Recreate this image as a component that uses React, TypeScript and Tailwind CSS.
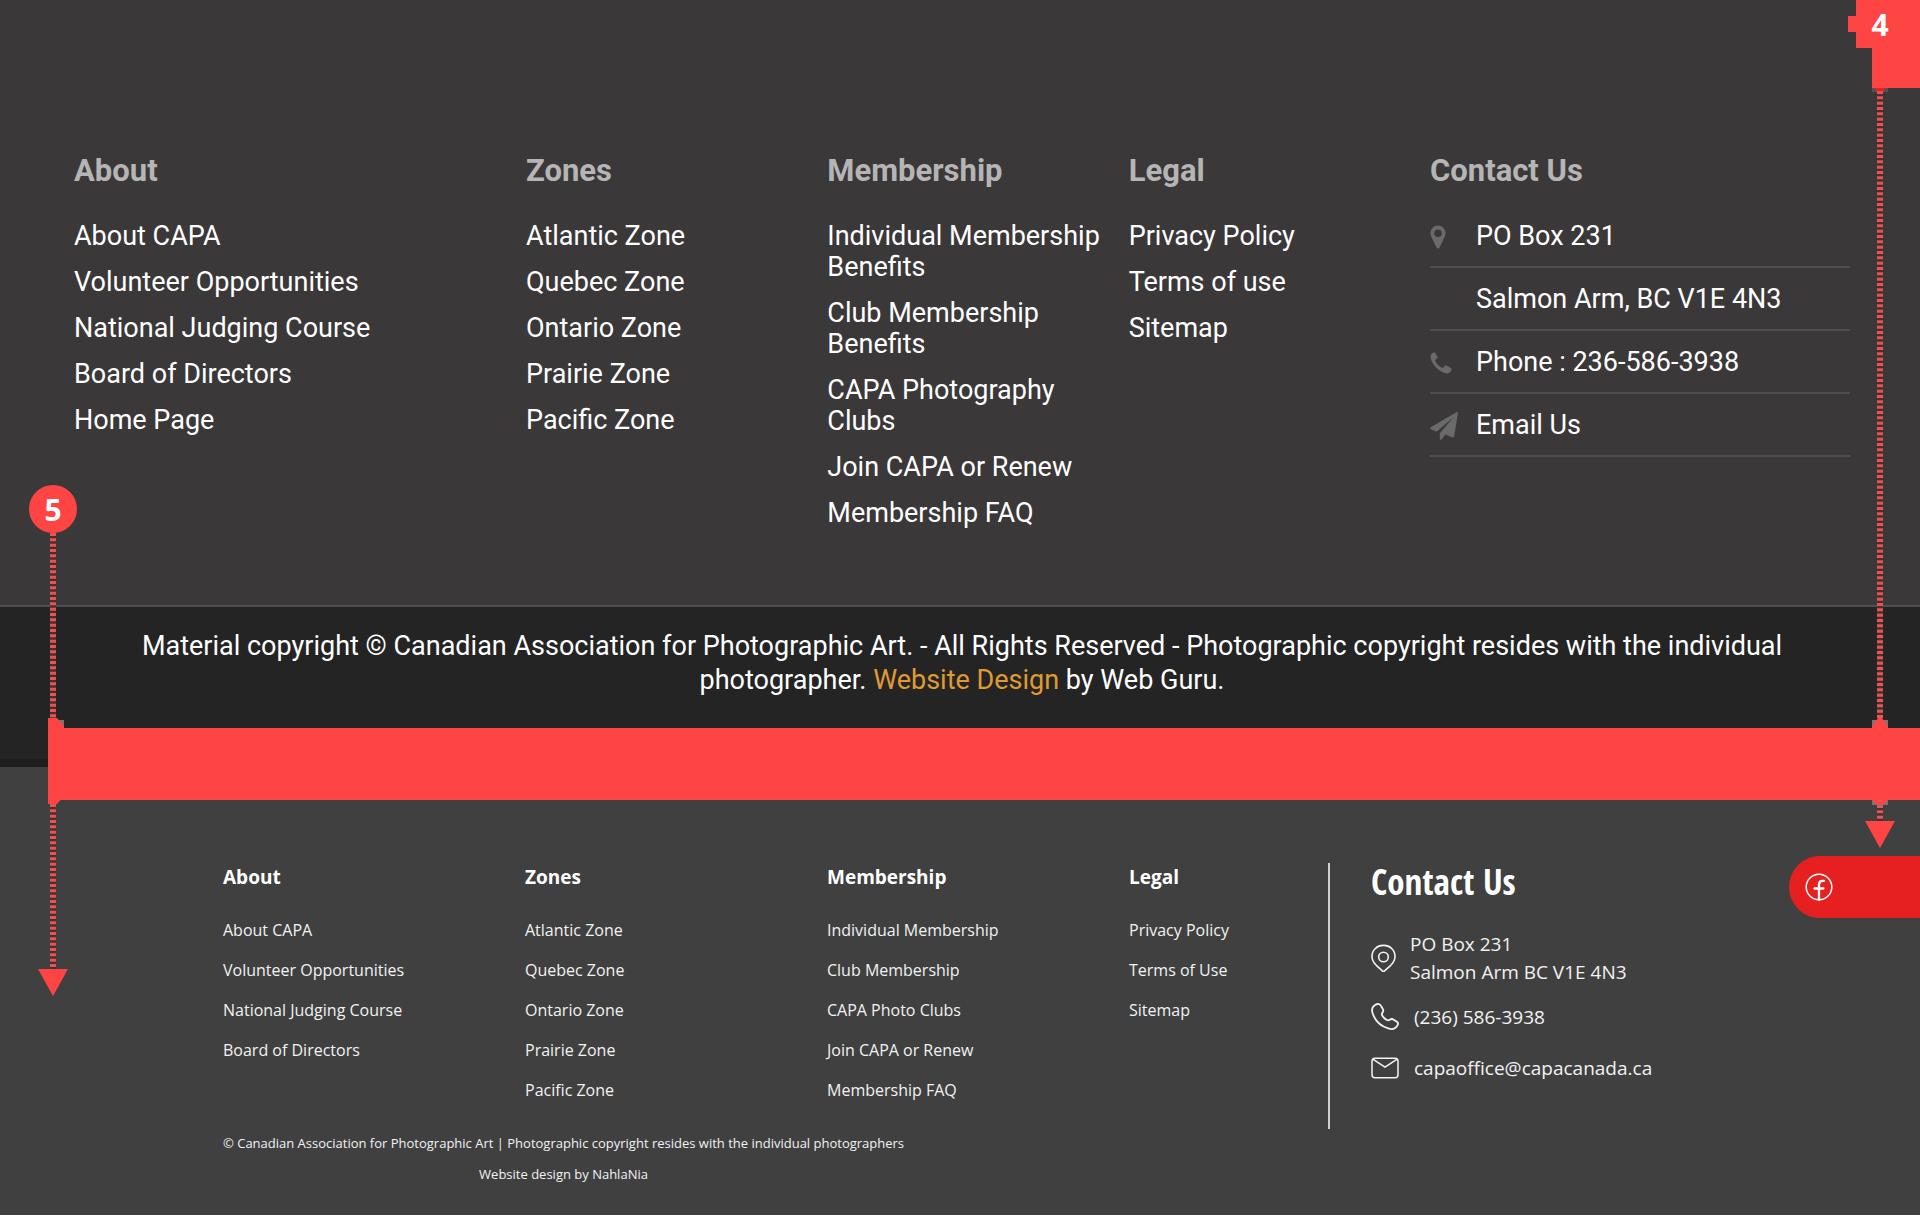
import React from "react";

type LinkGroup = { title: string; links: string[]; span?: string };

const currentGroups: LinkGroup[] = [
  {
    title: "About",
    span: "col-span-3",
    links: ["About CAPA", "Volunteer Opportunities", "National Judging Course", "Board of Directors", "Home Page"],
  },
  {
    title: "Zones",
    span: "col-span-2",
    links: ["Atlantic Zone", "Quebec Zone", "Ontario Zone", "Prairie Zone", "Pacific Zone"],
  },
  {
    title: "Membership",
    span: "col-span-2",
    links: [
      "Individual Membership Benefits",
      "Club Membership Benefits",
      "CAPA Photography Clubs",
      "Join CAPA or Renew",
      "Membership FAQ",
    ],
  },
  { title: "Legal", span: "col-span-2", links: ["Privacy Policy", "Terms of use", "Sitemap"] },
];

const redesignGroups: LinkGroup[] = [
  { title: "About", links: ["About CAPA", "Volunteer Opportunities", "National Judging Course", "Board of Directors"] },
  { title: "Zones", links: ["Atlantic Zone", "Quebec Zone", "Ontario Zone", "Prairie Zone", "Pacific Zone"] },
  {
    title: "Membership",
    links: ["Individual Membership", "Club Membership", "CAPA Photo Clubs", "Join CAPA or Renew", "Membership FAQ"],
  },
  { title: "Legal", links: ["Privacy Policy", "Terms of Use", "Sitemap"] },
];

function SolidPin() {
  return (
    <svg viewBox="0 0 16 24" className="h-6 w-4" fill="currentColor" aria-hidden="true">
      <path
        fillRule="evenodd"
        d="M8 .5a7.600 7.600 0 0 0-7.600 7.600c0 1.300.3 2.500.8 3.500l5.300 11c.6 1.200 2.400 1.200 3 0l5.300-11c.5-1 .8-2.200.8-3.500A7.600 7.600 0 0 0 8 .5Zm0 4a3.800 3.800 0 1 1 0 7.600a3.800 3.800 0 0 1 0-7.600Z"
      />
    </svg>
  );
}

function SolidPhone() {
  return (
    <svg viewBox="0 0 22 22" className="size-[22px]" fill="currentColor" aria-hidden="true">
      <path d="M21.500 17.200c0 .5-.3 1.600-.5 2.100-.5 1.100-2.500 2.100-3.800 2.100-1.600 0-3.100-.6-4.500-1.200C8.100 18.100 3.700 13.700 1.700 9.200 1 7.700.5 6.300.5 4.700.5 3.300 1.500 1.400 2.700.9 3.200.7 4.200.5 4.700.5c.3 0 .4 0 .6.4.7 1.300 1.400 2.600 2.100 3.800.1.200.3.400.3.700 0 1-2.700 2.100-2.700 2.900 0 .4.400.9.600 1.300 1.500 2.600 3.300 4.500 6 5.900.4.200.8.500 1.200.5.900 0 1.900-2.700 2.900-2.700.3 0 .5.200.7.300 1.300.7 2.500 1.400 3.800 2.100.4.200 1.300.5 1.300 1.500Z" />
    </svg>
  );
}

function SolidPlane() {
  return (
    <svg viewBox="0 0 28 28" className="size-7" fill="currentColor" aria-hidden="true">
      <path d="M27.600.2c.3.200.4.600.4 1l-4 23.500c-.1.600-.7 1-1.300.8l-7.200-2.900-4 4.800c-.6.700-1.700.4-1.700-.6v-5.500L23.500 5.300 6.500 19.700.8 17.300c-.9-.4-1-1.500-.1-2L26.500.2c.4-.2.800-.2 1.100 0Z" />
    </svg>
  );
}

function OutlinePin() {
  return (
    <svg viewBox="0 0 28 28" className="size-7" fill="none" stroke="currentColor" strokeWidth="1.600" aria-hidden="true">
      <path d="M12.500 1.400A11 11 0 0 0 1 12.500c0 4.200 2.300 6.800 4.300 8.800l5.800 5.400c.8.800 2 .8 2.800 0l5.800-5.400c2-2 4.300-4.600 4.300-8.800A11 11 0 0 0 12.500 1.400Z" />
      <circle cx="12.500" cy="13" r="4.800" />
    </svg>
  );
}

function OutlinePhone() {
  return (
    <svg viewBox="0 0 28 28" className="size-7" fill="none" stroke="currentColor" strokeWidth="1.800" strokeLinejoin="round" aria-hidden="true">
      <path d="M10.200 3.200 11.800 6c.8 1.300.6 2.400-.3 3.600-.9 1.200-1 2 0 3.300 1 1.600 2.300 2.800 3.900 3.900 1.300.9 2.100.8 3.300 0 1.200-.9 2.300-1.100 3.600-.4l3.300 2c1.400.9 1.800 2.300 1 3.800-1.800 3.400-4.900 4.600-8.700 3.500C9.900 23.400 3.700 17.200 1.400 9.600.400 6 1.800 3.200 4.900 1.500c1.900-1 4.200-.4 5.300 1.700Z" />
    </svg>
  );
}

function Envelope() {
  return (
    <svg viewBox="0 0 28 22" className="h-[22px] w-7" fill="none" stroke="currentColor" strokeWidth="1.500" strokeLinejoin="round" aria-hidden="true">
      <rect x="1" y="1.200" width="26" height="19.500" rx="3" />
      <path d="M1.800 2.200 14 10.200 26.200 2.200" />
    </svg>
  );
}

function Facebook() {
  return (
    <svg viewBox="0 0 28 28" className="size-7" fill="none" stroke="currentColor" aria-hidden="true">
      <circle cx="14" cy="14" r="12.800" strokeWidth="1.500" />
      <path d="M14 26.500V11.500c0-2.600 1.200-3.700 3.500-3.700h1.500M9.500 15.500h9" strokeWidth="2.300" strokeLinecap="round" />
    </svg>
  );
}

function DottedLine({ length }: { length: number }) {
  return (
    <svg width="6" height={length} className="block" aria-hidden="true">
      <rect width="6" height={length} fill="#4a2e2e" />
      <line x1="3" y1="0" x2="3" y2={length} stroke="#e15656" strokeWidth="6" strokeDasharray="3 2.333" />
    </svg>
  );
}

function ArrowHead() {
  return (
    <svg viewBox="0 0 30 27" className="block h-[27px] w-[30px]" fill="#ff4444" aria-hidden="true">
      <path d="M0 0h30L15 27Z" />
    </svg>
  );
}

function CurrentFooter() {
  const rows = [
    { icon: <SolidPin />, text: "PO Box 231" },
    { icon: null, text: "Salmon Arm, BC V1E 4N3" },
    { icon: <SolidPhone />, text: "Phone : 236-586-3938", href: "#phone" },
    { icon: <SolidPlane />, text: "Email Us", href: "#email" },
  ];
  return (
    <section className="font-['Roboto',sans-serif] text-[27px] leading-[31px] text-white">
      <div className="grid grid-cols-12 gap-x-8 border-b-2 border-[#504f4f] bg-[#3b3839] pt-[153px] pr-[70px] pb-[76px] pl-[74px]">
        {currentGroups.map((g) => (
          <nav key={g.title} aria-label={g.title} className={g.span}>
            <h2 className="text-[31px] leading-9 font-bold text-[#b5b5b5]">{g.title}</h2>
            <ul className="mt-8 -mr-4 flex flex-col gap-[15px]">
              {g.links.map((l) => (
                <li key={l}>
                  <a href="#link" className="block">{l}</a>
                </li>
              ))}
            </ul>
          </nav>
        ))}
        <div className="col-span-3">
          <h2 className="text-[31px] leading-9 font-bold text-[#b5b5b5]">Contact Us</h2>
          <ul className="mt-8">
            {rows.map((r) => (
              <li key={r.text} className="mb-4 flex items-center border-b-2 border-[#504f4f] pb-[14px]">
                <span className="w-[46px] shrink-0 text-[#6a6a6a]">{r.icon}</span>
                {r.href ? <a href={r.href}>{r.text}</a> : <span>{r.text}</span>}
              </li>
            ))}
          </ul>
        </div>
      </div>
      <p className="border-b-8 border-[#1f1f1f] bg-[#242424] pt-[22px] pr-[120px] pb-[62px] pl-[124px] text-center leading-[34px]">
        Material copyright © Canadian Association for Photographic Art. - All Rights Reserved - Photographic copyright
        resides with the individual photographer.{" "}
        <a href="#design" className="text-[#e09a33]">Website Design</a> by Web Guru.
      </p>
    </section>
  );
}

function RedesignFooter() {
  return (
    <section className="flex bg-[#404040] pt-24 pl-[223px] font-['Open_Sans',sans-serif] text-white">
      <div className="w-[1105px] shrink-0 pb-[25px]">
        <div className="grid grid-cols-[302px_302px_302px_1fr]">
          {redesignGroups.map((g) => (
            <nav key={g.title} aria-label={g.title}>
              <h2 className="text-[19px] leading-7 font-bold">{g.title}</h2>
              <ul className="mt-[19px]">
                {g.links.map((l) => (
                  <li key={l}>
                    <a href="#link" className="block text-[16px] leading-10 text-[#f2f2f2]">{l}</a>
                  </li>
                ))}
              </ul>
            </nav>
          ))}
        </div>
        <p className="mt-[18px] w-fit text-center text-[13px] leading-[31px] text-[#f2f2f2]">
          © Canadian Association for Photographic Art | Photographic copyright resides with the individual photographers
          <br />
          Website design by NahlaNia
        </p>
      </div>
      <div className="h-[266px] w-[2px] shrink-0 bg-[#d0d0d0]" />
      <div className="pl-[41px] text-[19px] leading-7 text-[#f2f2f2]">
        <h2 className="font-['Open_Sans_Condensed','Open_Sans',sans-serif] text-[35px] leading-[38px] font-bold text-white">Contact Us</h2>
        <address className="mt-[29px] not-italic">
          <div className="flex items-center gap-[11px]">
            <OutlinePin />
            <p>PO Box 231<br />Salmon Arm BC V1E 4N3</p>
          </div>
          <a href="#phone" className="mt-[17px] flex items-center gap-[15px]"><OutlinePhone />(236) 586-3938</a>
          <a href="#mail" className="mt-[23px] flex items-center gap-[15px]"><Envelope />capaoffice@capacanada.ca</a>
        </address>
      </div>
    </section>
  );
}

export default function App() {
  return (
    <main className="relative overflow-hidden bg-white">
      <CurrentFooter />
      <RedesignFooter />

      <div className="absolute top-[728px] right-0 left-12 h-[72px] bg-[#ff4444]" />

      <div className="absolute top-[485px] left-[29px] flex w-12 flex-col items-center font-['Open_Sans',sans-serif] text-[30px] font-bold text-white">
        <span className="flex size-12 items-center justify-center rounded-full bg-[#ff4444]">5</span>
        <DottedLine length={185} />
        <svg viewBox="0 0 16 86" className="ml-[6px] block h-[86px] w-4" aria-hidden="true">
          <path d="M10 2h6v8Z" fill="#7c7474" />
          <path d="M0 0h9l7 8v70l-7 8H0Z" fill="#ff4444" />
        </svg>
        <DottedLine length={165} />
        <ArrowHead />
      </div>

      <svg viewBox="0 0 72 92" className="absolute top-0 right-0 h-[92px] w-[72px]" aria-hidden="true">
        <path d="M24 88h16v4H24Z" fill="#5a5051" />
        <path d="M8 0h64v88H24V48H8V32H0V16h8Z" fill="#ff4444" />
        <path d="M26 88h12l-3 3h-6Z" fill="#e81f1f" />
      </svg>
      <div className="absolute top-0 right-4 flex w-12 flex-col items-center font-['Open_Sans',sans-serif] text-[30px] font-bold text-white">
        <span className="flex h-[91px] items-start pt-[5px] leading-10">4</span>
        <DottedLine length={627} />
        <svg viewBox="0 0 16 87" className="block h-[87px] w-4" aria-hidden="true">
          <path d="M0 2h16v8H0ZM0 82h16v5H0Z" fill="#7c7474" />
          <path d="M0 8 6 0h4l6 8v74l-4 4H4l-4-4Z" fill="#ff4444" />
        </svg>
        <DottedLine length={16} />
        <ArrowHead />
      </div>

      <a
        href="#facebook"
        aria-label="Facebook"
        className="absolute top-[856px] right-0 flex h-[62px] w-[131px] items-center rounded-l-full bg-[#e62020] pl-4 text-white"
      >
        <Facebook />
      </a>
    </main>
  );
}
